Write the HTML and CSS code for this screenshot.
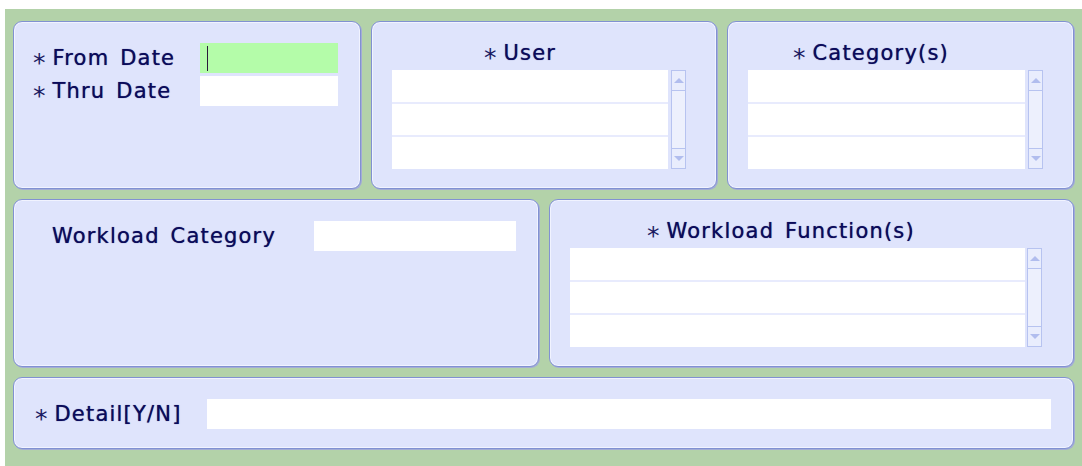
FILE: index.html
```html
<!DOCTYPE html>
<html lang="en">
<head>
<meta charset="utf-8">
<title>Workload Report Criteria</title>
<link rel="stylesheet" href="styles.css">
</head>
<body>
<div class="sheet">
  <div class="row row-top">
    <section class="panel panel-dates">
      <div class="pair-grid">
        <label class="lbl"><span class="req">*</span>From Date</label>
        <div class="field field-active"><span class="caret"></span></div>
        <label class="lbl"><span class="req">*</span>Thru Date</label>
        <div class="field"></div>
      </div>
    </section>

    <section class="panel panel-list panel-user">
      <div class="lbl list-title"><span class="req">*</span>User</div>
      <div class="listbox">
        <div class="list-rows">
          <div class="list-row"></div>
          <div class="list-row"></div>
          <div class="list-row"></div>
        </div>
        <div class="scrollbar">
          <div class="sb-btn sb-up"><span class="tri tri-up"></span></div>
          <div class="sb-track"></div>
          <div class="sb-btn sb-down"><span class="tri tri-down"></span></div>
        </div>
      </div>
    </section>

    <section class="panel panel-list panel-cat">
      <div class="lbl list-title"><span class="req">*</span>Category(s)</div>
      <div class="listbox">
        <div class="list-rows">
          <div class="list-row"></div>
          <div class="list-row"></div>
          <div class="list-row"></div>
        </div>
        <div class="scrollbar">
          <div class="sb-btn sb-up"><span class="tri tri-up"></span></div>
          <div class="sb-track"></div>
          <div class="sb-btn sb-down"><span class="tri tri-down"></span></div>
        </div>
      </div>
    </section>
  </div>

  <div class="row row-mid">
    <section class="panel panel-wcat">
      <div class="wcat-line">
        <label class="lbl">Workload Category</label>
        <div class="field field-wcat"></div>
      </div>
    </section>

    <section class="panel panel-list panel-func">
      <div class="lbl list-title"><span class="req">*</span>Workload Function(s)</div>
      <div class="listbox listbox-func">
        <div class="list-rows">
          <div class="list-row"></div>
          <div class="list-row"></div>
          <div class="list-row"></div>
        </div>
        <div class="scrollbar">
          <div class="sb-btn sb-up"><span class="tri tri-up"></span></div>
          <div class="sb-track"></div>
          <div class="sb-btn sb-down"><span class="tri tri-down"></span></div>
        </div>
      </div>
    </section>
  </div>

  <section class="panel panel-detail">
    <label class="lbl"><span class="req">*</span>Detail[Y/N]</label>
    <div class="field field-detail"></div>
  </section>
</div>
</body>
</html>
```

FILE: styles.css
```css
* {
  box-sizing: border-box;
}

html, body {
  margin: 0;
  padding: 0;
  background: #ffffff;
}

body {
  width: 1082px;
  height: 466px;
  overflow: hidden;
  font-family: "DejaVu Sans", Verdana, sans-serif;
  color: #0a0a5a;
}

/* green backdrop holding all criteria panels */
.sheet {
  margin: 9px 0 0 5px;
  height: 457px;
  background: #b3d2a9;
  padding: 12px 8px 17px 8px;
  display: flex;
  flex-direction: column;
  gap: 10px;
}

.row {
  display: grid;
  gap: 10px;
  height: 168px;
}

.row-top {
  grid-template-columns: 348px 346px 1fr;
}

.row-mid {
  grid-template-columns: 526px 1fr;
}

.panel {
  background: #dfe4fc;
  border: 1px solid #8191d2;
  border-radius: 9px;
  box-shadow: inset 0 0 0 1px #f1f3ff, 1px 1px 0 #a3acd6;
}

/* label text */
.lbl {
  font-size: 21px;
  letter-spacing: 1.2px;
  word-spacing: 3px;
  line-height: 24px;
  white-space: nowrap;
  color: #0a0a5a;
  text-shadow: 0 0 0.8px rgba(10, 10, 90, 0.8);
}

.req {
  display: inline-block;
  font-size: 25px;
  line-height: 10px;
  letter-spacing: 0;
  vertical-align: -6px;
  margin-right: 7px;
  color: #1a1a62;
  text-shadow: none;
}

.field {
  height: 30px;
  background: #ffffff;
}

/* date range panel */
.panel-dates {
  padding: 21px 0 0 19px;
}

.pair-grid {
  display: grid;
  grid-template-columns: 167px 138px;
  grid-auto-rows: 30px;
  row-gap: 3px;
  align-items: center;
}

.field-active {
  background: #b4fca9;
  display: flex;
  align-items: center;
  padding-left: 7px;
}

.caret {
  width: 1px;
  height: 25px;
  background: #2a1a3a;
}

/* list panels */
.panel-list {
  padding: 19px 30px 0 20px;
  display: flex;
  flex-direction: column;
}

.panel-user .list-title {
  padding-left: 92px;
}

.panel-cat .list-title {
  padding-left: 45px;
}

.panel-func {
  padding-right: 31px;
}

.panel-func .list-title {
  padding-left: 77px;
}

.listbox {
  margin-top: 5px;
  height: 99px;
  display: flex;
  gap: 3px;
}

.listbox-func {
  gap: 2px;
}

.list-rows {
  flex: 1;
  display: grid;
  grid-template-rows: 32px 31px 32px;
  row-gap: 2px;
  background: #e8ebfd;
}

.list-row {
  background: #ffffff;
}

.scrollbar {
  width: 15px;
  border: 1px solid #b7c3f0;
  background: #edf0fd;
  display: flex;
  flex-direction: column;
}

.sb-btn {
  height: 20px;
  display: flex;
  align-items: center;
  justify-content: center;
  background: #e9edfd;
}

.sb-up {
  border-bottom: 1px solid #b7c3f0;
}

.sb-down {
  border-top: 1px solid #b7c3f0;
}

.sb-track {
  flex: 1;
}

.tri {
  width: 0;
  height: 0;
  border-left: 5px solid transparent;
  border-right: 5px solid transparent;
}

.tri-up {
  border-bottom: 5px solid #b1bdee;
}

.tri-down {
  border-top: 5px solid #b1bdee;
}

/* workload category panel */
.panel-wcat {
  padding: 21px 0 0 38px;
}

.wcat-line {
  display: grid;
  grid-template-columns: 262px 202px;
  align-items: center;
}

/* detail flag panel */
.panel-detail {
  height: 72px;
  padding: 21px 22px 0 21px;
  display: grid;
  grid-template-columns: 172px 1fr;
  align-items: start;
}

.panel-detail .lbl {
  line-height: 30px;
}
```
